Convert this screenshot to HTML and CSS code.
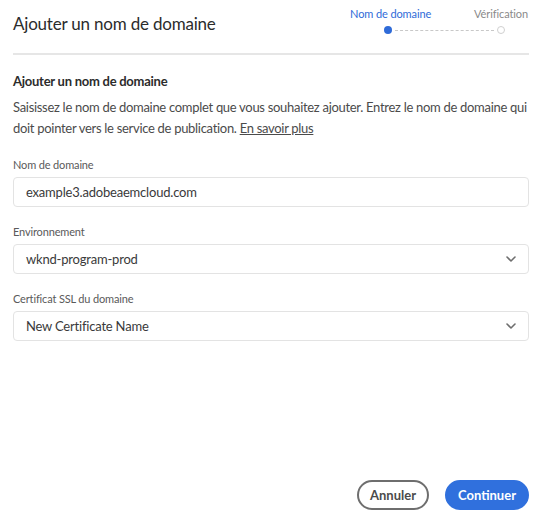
FILE: index.html
```html
<!DOCTYPE html>
<html lang="fr">
<head>
<meta charset="utf-8">
<link rel="stylesheet" href="styles.css">
</head>
<body>
<div class="dialog">
  <header class="head">
    <h1 class="title">Ajouter un nom de domaine</h1>
    <div class="stepper">
      <div class="step-labels">
        <span class="step active">Nom de domaine</span>
        <span class="step">Vérification</span>
      </div>
      <div class="track">
        <span class="dot filled"></span>
        <span class="dash"></span>
        <span class="dot hollow"></span>
      </div>
    </div>
  </header>
  <div class="divider"></div>
  <section class="body">
    <h2 class="subtitle">Ajouter un nom de domaine</h2>
    <p class="desc">Saisissez le nom de domaine complet que vous souhaitez ajouter. Entrez le nom de domaine qui doit pointer vers le service de publication. <a href="#" class="link">En savoir plus</a></p>
    <div class="field">
      <label class="label">Nom de domaine</label>
      <div class="input">example3.adobeaemcloud.com</div>
    </div>
    <div class="field">
      <label class="label">Environnement</label>
      <div class="input select">wknd-program-prod
        <svg class="chev" width="10" height="6" viewBox="0 0 10 6"><path d="M1 1l4 4 4-4" fill="none" stroke="#6e6e6e" stroke-width="1.6" stroke-linecap="round" stroke-linejoin="round"/></svg>
      </div>
    </div>
    <div class="field">
      <label class="label">Certificat SSL du domaine</label>
      <div class="input select">New Certificate Name
        <svg class="chev" width="10" height="6" viewBox="0 0 10 6"><path d="M1 1l4 4 4-4" fill="none" stroke="#6e6e6e" stroke-width="1.6" stroke-linecap="round" stroke-linejoin="round"/></svg>
      </div>
    </div>
  </section>
  <footer class="foot">
    <button class="btn secondary">Annuler</button>
    <button class="btn primary">Continuer</button>
  </footer>
</div>
</body>
</html>
```
FILE: styles.css
```css
* { box-sizing: border-box; }
html, body { margin: 0; padding: 0; background: #fff; }
body {
  font-family: Lato, "Noto Sans", sans-serif;
  color: #2c2c2c;
  width: 544px;
  height: 522px;
}
.dialog {
  display: flex;
  flex-direction: column;
  height: 522px;
  padding: 0 15px 12px 13px;
}
.head {
  display: flex;
  justify-content: space-between;
  align-items: flex-start;
  height: 53px;
}
.title {
  margin: 13px 0 0;
  font-size: 17px;
  line-height: 22px;
  letter-spacing: -0.2px;
  font-weight: 400;
  color: #2c2c2c;
}
.stepper {
  margin-top: 7px;
  width: 178px;
  margin-right: 1px;
}
.step-labels {
  display: flex;
  justify-content: space-between;
  font-size: 11px;
  line-height: 14px;
  letter-spacing: -0.1px;
}
.step { color: #8a8a8a; }
.step.active { color: #2f6bd8; }
.track {
  display: flex;
  align-items: center;
  margin: 5px 0 0 34px;
  width: 121px;
}
.dot {
  width: 8px; height: 8px; border-radius: 50%;
  flex: none;
}
.dot.filled { background: #2f6bd8; }
.dot.hollow { border: 1.5px solid #d0d0d0; width: 8px; height: 8px; }
.dash {
  flex: 1;
  height: 0;
  border-top: 1px dashed #c8c8c8;
  margin: 0 3px;
}
.divider {
  height: 2px;
  background: #e6e6e6;
}
.body { flex: 1; }
.subtitle {
  margin: 18px 0 0;
  font-size: 13px;
  letter-spacing: -0.25px;
  font-weight: 700;
  color: #2c2c2c;
}
.desc {
  margin: 8px 0 0;
  font-size: 13px;
  letter-spacing: -0.3px;
  line-height: 21px;
  color: #4b4b4b;
}
.link { color: #4b4b4b; text-decoration: underline; }
.field { margin-top: 18px; }
.field + .field { margin-top: 17px; }
.label {
  display: block;
  font-size: 11px;
  letter-spacing: -0.15px;
  line-height: 15px;
  color: #5a5a5a;
  margin-bottom: 5px;
}
.input {
  height: 30px;
  border: 1px solid #e3e3e3;
  border-radius: 4px;
  padding: 0 12px;
  display: flex;
  align-items: center;
  justify-content: space-between;
  font-size: 13px;
  letter-spacing: -0.2px;
  color: #3a3a3a;
}
.foot {
  display: flex;
  justify-content: flex-end;
  gap: 16px;
}
.btn {
  height: 30px;
  border-radius: 15px;
  font-family: inherit;
  font-size: 13px;
  font-weight: 700;
  padding: 0 11px;
  cursor: pointer;
}
.btn.secondary {
  background: #fff;
  border: 2px solid #6e6e6e;
  color: #4b4b4b;
}
.btn.primary {
  background: #3070dd;
  border: 2px solid #3070dd;
  color: #fff;
}
```
